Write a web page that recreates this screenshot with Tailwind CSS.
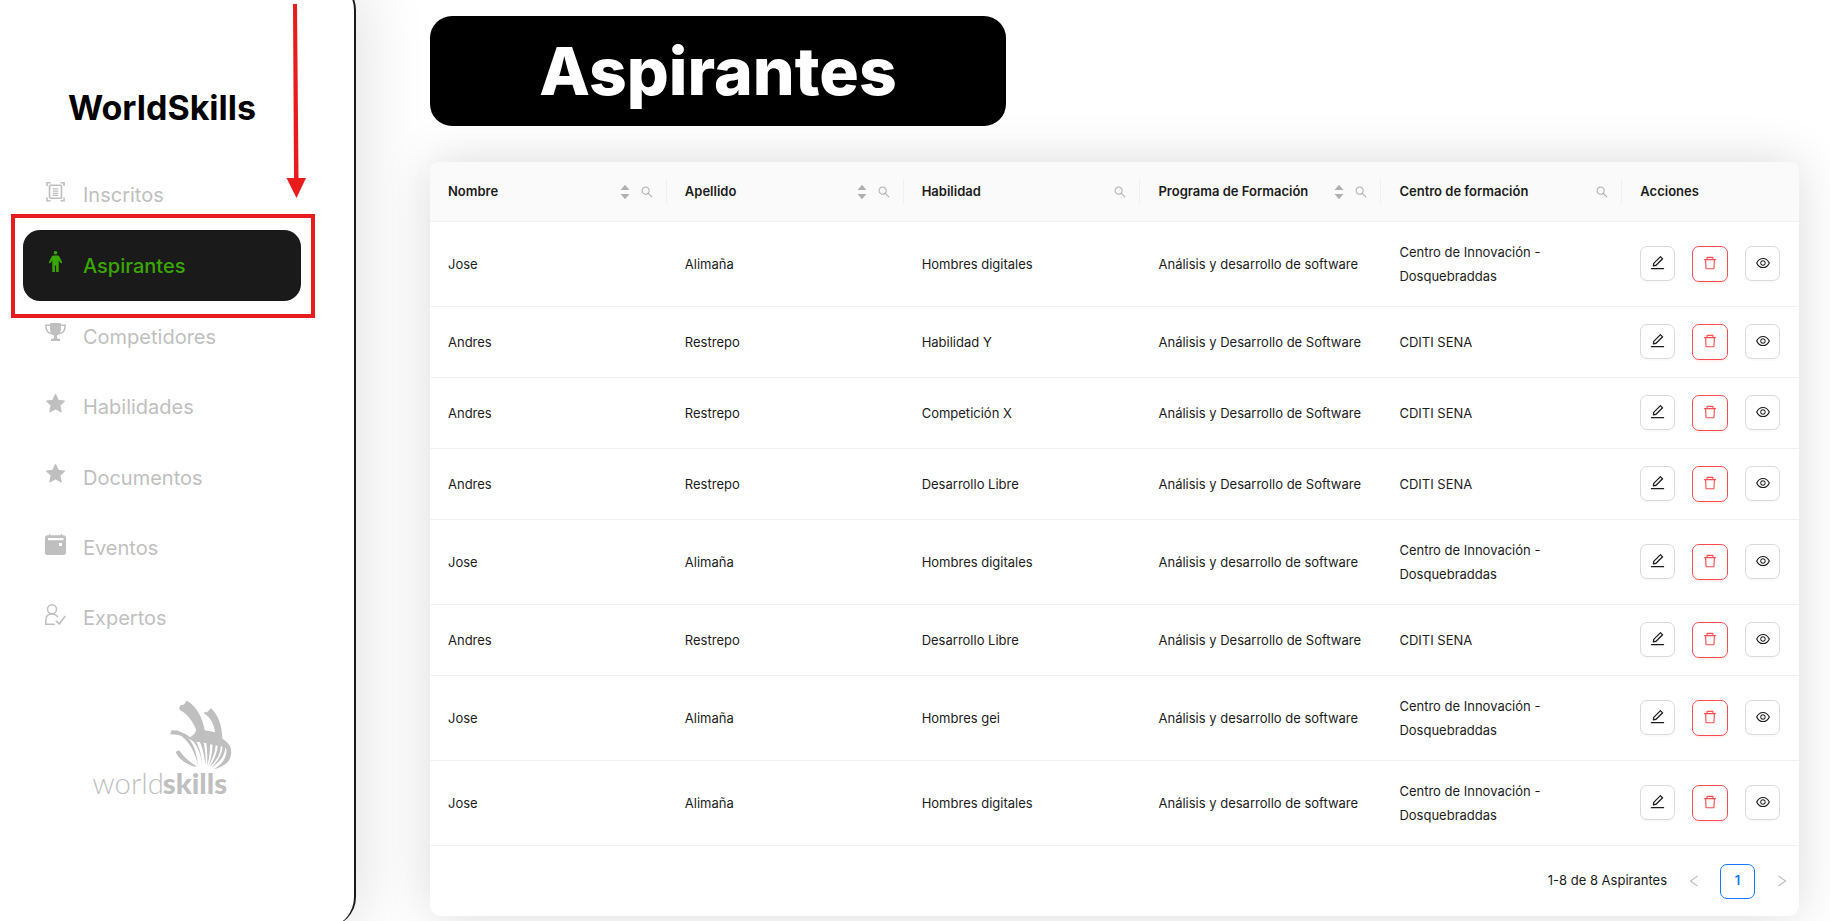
<!DOCTYPE html>
<html lang="es">
<head>
<meta charset="utf-8">
<meta name="viewport" content="width=device-width, initial-scale=1">
<title>WorldSkills - Aspirantes</title>
<script src="https://cdn.jsdelivr.net/npm/@tailwindcss/browser@4"></script>
</head>
<body class="bg-white font-[Inter,'Liberation_Sans',sans-serif] text-[#1c1c1c]">
<svg class="hidden" aria-hidden="true">
  <symbol id="sort" viewBox="0 0 10 16"><path d="M5 .8 9.500 6H.5zM5 15.200 .5 10h9z"/></symbol>
  <symbol id="search" viewBox="0 0 1024 1024"><path d="M909.6 854.5L649.9 594.8C690.2 542.7 712 479 712 412c0-80.2-31.3-155.4-87.9-212.1-56.6-56.7-132-87.9-212.1-87.9s-155.5 31.3-212.1 87.9C143.2 256.5 112 331.8 112 412c0 80.1 31.3 155.5 87.9 212.1C256.5 680.8 331.8 712 412 712c67 0 130.6-21.8 182.7-62l259.7 259.6a8.2 8.2 0 0 0 11.6 0l43.6-43.5a8.2 8.2 0 0 0 0-11.6zM570.4 570.4C528 612.7 471.8 636 412 636s-116-23.3-158.4-65.6C211.3 528 188 471.8 188 412s23.3-116.1 65.6-158.4C296 211.3 352.2 188 412 188s116.1 23.2 158.4 65.600S636 352.2 636 412s-23.3 116.1-65.6 158.400z"/></symbol>
  <symbol id="edit" viewBox="0 0 1024 1024"><path d="M257.7 752c2 0 4-.2 6-.5L431.9 722c2-.4 3.9-1.3 5.3-2.8l423.9-423.9a9.96 9.96 0 0 0 0-14.1L694.9 114.900c-1.9-1.9-4.4-2.9-7.1-2.9s-5.2 1-7.1 2.9L256.8 538.8c-1.5 1.5-2.4 3.3-2.8 5.3l-29.5 168.2a33.5 33.5 0 0 0 9.4 29.8c6.600 6.400 14.900 9.900 23.800 9.900zm67.400-174.400L687.800 215l73.300 73.300-362.700 362.600-88.900 15.700 15.600-89zM880 836H144c-17.700 0-32 14.300-32 32v36c0 4.400 3.600 8 8 8h784c4.400 0 8-3.600 8-8v-36c0-17.700-14.300-32-32-32z"/></symbol>
  <symbol id="trash" viewBox="0 0 1024 1024"><path d="M360 184h-8c4.400 0 8-3.600 8-8v8h304v-8c0 4.400 3.600 8 8 8h-8v72h72v-80c0-35.300-28.700-64-64-64H352c-35.300 0-64 28.700-64 64v80h72v-72zm504 72H160c-17.700 0-32 14.300-32 32v32c0 4.400 3.600 8 8 8h60.400l24.700 523c1.600 34.100 29.800 61 63.900 61h454c34.200 0 62.300-26.800 63.900-61l24.700-523H888c4.400 0 8-3.600 8-8v-32c0-17.700-14.300-32-32-32zM731.300 840H292.700l-24.200-512h487l-24.200 512z"/></symbol>
  <symbol id="eye" viewBox="0 0 1024 1024"><path d="M942.2 486.2C847.4 286.5 704.1 186 512 186c-192.2 0-335.4 100.5-430.2 300.3a60.3 60.3 0 0 0 0 51.5C176.6 737.5 319.9 838 512 838c192.2 0 335.4-100.5 430.2-300.3 7.700-16.200 7.700-35 0-51.500zM512 766c-161.300 0-279.400-81.800-362.700-254C232.600 339.800 350.700 258 512 258c161.300 0 279.400 81.800 362.700 254C791.500 684.200 673.400 766 512 766zm-4-430c-97.200 0-176 78.800-176 176s78.800 176 176 176 176-78.800 176-176-78.800-176-176-176zm0 288c-61.900 0-112-50.100-112-112s50.100-112 112-112 112 50.100 112 112-50.100 112-112 112z"/></symbol>
</svg>

<div class="relative flex h-screen overflow-hidden">
  <!-- Sidebar -->
  <aside class="-mt-5 h-[calc(100vh+26px)] w-[356px] shrink-0 rounded-r-[30px] border-r-2 border-[#1a1a1a] bg-white pr-[53px] pl-[23px] shadow-[0_0_70px_rgba(0,0,0,0.15)]">
    <h2 class="pt-[108px] text-center text-[34px] leading-10 font-bold text-black">WorldSkills</h2>
    <nav class="mt-8 text-xl text-[#bfbfbf]">
      <a href="#" class="flex h-[70px] items-center gap-[17px] pl-[22px]">
        <svg class="mb-2 size-[21px]" viewBox="0 0 21 21" fill="none" stroke="currentColor" stroke-width="1.600"><path d="M2 5V1.700h3.500M15.500 1.700H19V5M19 16.500v3.300h-3.500M5.500 19.800H2v-3.300"/><rect x="4.500" y="4.300" width="12" height="13" rx="1"/><path d="M7.800 7.800h5.400M7.800 10.100h5.400M7.800 12.300h5.400M7.800 14.400h5.400" stroke-width="1.300"/></svg>
        Inscritos</a>
      <a href="#" aria-current="page" class="flex h-[71px] items-center gap-[17px] rounded-[17px] bg-[#1a1a1a] pl-[22px] font-medium text-[#3ba800]">
        <svg class="mb-2 size-[21px]" viewBox="0 0 21 21" fill="currentColor"><circle cx="10.500" cy="1.800" r="1.800"/><path d="M8.800 4.500h3.400c1.200 0 2 .6 2.500 1.700l2.300 4.700c.4 1.100-1.100 1.900-1.700.9L13.700 9.300V21h-2.600v-6.500H9.900V21H7.300V9.300l-1.600 2.500c-.6 1-2.100.2-1.700-.9l2.300-4.700c.5-1.100 1.300-1.700 2.500-1.700z"/></svg>
        Aspirantes</a>
      <a href="#" class="flex h-[71px] items-center gap-[17px] pl-[22px]">
        <svg class="mb-2 size-[21px]" viewBox="0 0 21 21"><path fill="currentColor" d="M5 1.900a1 1 0 0 1 1-1h9a1 1 0 0 1 1 1v4.500c0 3.600-1.400 6-4 7v2.900l3 .8v1.800H6v-1.800l3-.8v-2.900C6.400 12.400 5 10 5 6.400z"/><path fill="none" stroke="currentColor" stroke-width="1.500" d="M5.200 3.300H.8c0 5 2.200 8 6 8.400M15.800 3.300h4.400c0 5-2.200 8-6 8.400"/></svg>
        Competidores</a>
      <a href="#" class="flex h-[70px] items-center gap-[17px] pl-[22px]">
        <svg class="mb-2 size-[21px]" viewBox="0 0 21 21" fill="currentColor" stroke="currentColor" stroke-width="1.400" stroke-linejoin="round"><path d="m10.500 1.800 2.600 5.600 6.200.7-4.600 4.200 1.300 6.400-5.500-3.100L5 18.700l1.300-6.400-4.600-4.200 6.200-.7z"/></svg>
        Habilidades</a>
      <a href="#" class="flex h-[71px] items-center gap-[17px] pl-[22px]">
        <svg class="mb-2 size-[21px]" viewBox="0 0 21 21" fill="currentColor" stroke="currentColor" stroke-width="1.400" stroke-linejoin="round"><path d="m10.500 1.800 2.600 5.600 6.200.7-4.600 4.200 1.300 6.400-5.500-3.100L5 18.700l1.300-6.400-4.600-4.200 6.200-.7z"/></svg>
        Documentos</a>
      <a href="#" class="flex h-[70px] items-center gap-[17px] pl-[22px]">
        <svg class="mb-2 size-[21px]" viewBox="0 0 21 21" fill="currentColor" fill-rule="evenodd"><path d="M4 0h1.200v1.200h10.600V0H17v1.200h1.500A2.500 2.500 0 0 1 21 3.700v14.800a2.500 2.500 0 0 1-2.500 2.500h-16A2.500 2.500 0 0 1 0 18.500V3.700a2.500 2.500 0 0 1 2.500-2.500H4zM3 3.900v2.300h15.500V3.900zM14 9v3h3V9z"/></svg>
        Eventos</a>
      <a href="#" class="flex h-[70px] items-center gap-[17px] pl-[22px]">
        <svg class="mb-2 size-[21px]" viewBox="0 0 21 21" fill="none" stroke="currentColor" stroke-width="1.500"><circle cx="7" cy="5.300" r="4.500"/><path d="M9.800 20.200H.8v-3.700C.8 12.500 3.200 10 6.800 10c3 0 4.900 1.100 6 3.300M10.800 16.800l3.600 3L20.300 12"/></svg>
        Expertos</a>
    </nav>
    <svg class="mt-[45px] ml-16 w-[150px] overflow-visible" viewBox="81 54 450 300" fill="#bfbfbf" role="img" aria-label="worldskills">
      <g transform="translate(300 45)">
        <path d="M58 38 62 30q8 1 12-4l6-9C108 30 128 68 134 106l31 6c-2-24-14-45-33-57l1-4q8 2 12-3l7-8c22 18 34 50 35 91 22 13 31 30 25 52-4-18-14-24-29-29-25-4-42-9-62-12-10-4-20-12-36-14 15-5 22-13 23-25C98 79 82 55 59 45z"/>
        <path d="m30 118 6-14q8 4 14 2 24 8 45 24l25 10q-12 3-22-2c-12-9-40-20-68-20z"/>
        <path d="M56 117c26 4 50 20 59 97-9-40-25-74-59-97zM47 172l5-5h7c12 18 28 33 52 47l-8 1c-28-10-46-22-56-43z"/>
        <path d="m96 134 8-2c14 22 20 45 24 80-6-36-14-58-32-78zM117 135l12 1c7 26 9 50 7 76-3-32-8-54-19-77zM138 137l12 2c1 26-2 50-8 73 0-24 0-50-4-75zM158 142l9 2c0 26-9 48-22 69 9-24 13-46 13-71zM173 145l9 2c2 28-12 50-33 68 14-22 24-42 24-70zM188 150l7 4c2 28-16 48-42 64 20-18 34-38 35-68zM199 156l13 15c4 28-22 46-52 52 26-14 43-34 39-67z"/>
      </g>
      <text x="97" y="343" class="font-[Lato] text-[88px] font-light">world</text>
      <text x="308" y="343" class="font-[Lato] text-[88px] font-black">skills</text>
    </svg>
  </aside>

  <!-- Content -->
  <main class="min-w-0 flex-1 pt-4 pr-[31px] pl-[74px]">
    <h1 class="flex h-[110px] w-full max-w-xl items-center justify-center rounded-[22px] bg-black text-[66px] leading-none font-extrabold text-white">Aspirantes</h1>
    <section class="mt-9 rounded-[10px] bg-white text-[13px] shadow-[0_0_50px_rgba(0,0,0,0.15)]">
      <table class="w-full table-fixed border-separate border-spacing-0 text-left">
        <colgroup><col class="w-[17.3%]"><col class="w-[17.3%]"><col class="w-[17.3%]"><col class="w-[17.6%]"><col class="w-[17.6%]"><col class="w-[12.9%]"></colgroup>
        <thead><tr id="head"></tr></thead>
        <tbody id="rows"></tbody>
      </table>
      <div class="flex h-[70px] items-center justify-end gap-[9px]">
        <span>1-8 de 8 Aspirantes</span>
        <button disabled aria-label="Anterior" class="flex size-[35px] items-center justify-center text-[#bfbfbf]"><svg class="size-3" viewBox="0 0 12 12" fill="none" stroke="currentColor" stroke-width="1.200"><path d="M9.500 1 2.500 6l7 5"/></svg></button>
        <button aria-current="page" class="size-[35px] rounded-[7px] border border-[#1677ff] font-semibold text-[#1677ff]">1</button>
        <button disabled aria-label="Siguiente" class="flex size-[35px] items-center justify-center text-[#bfbfbf]"><svg class="size-3" viewBox="0 0 12 12" fill="none" stroke="currentColor" stroke-width="1.200"><path d="m2.500 1 7 5-7 5"/></svg></button>
      </div>
    </section>
  </main>

  <!-- Highlight over the active menu entry -->
  <div class="pointer-events-none absolute top-[214px] left-[11px] h-[104px] w-[304px] border-4 border-[#e81c1c]"></div>
  <svg class="pointer-events-none absolute top-0 left-[280px] h-[200px] w-8" viewBox="0 0 32 200" fill="#e81c1c" aria-hidden="true"><path d="M13 4h4l1.500 174H26L16.500 198 6.500 178h7.500z"/></svg>
</div>

<script>
const columns = [['Nombre', true, true], ['Apellido', true, true], ['Habilidad', false, true], ['Programa de Formación', true, true], ['Centro de formación', false, true], ['Acciones', false, false]];
const icon = (id, cls) => `<svg class="${cls}" fill="currentColor" aria-hidden="true"><use href="#${id}"/></svg>`;
document.getElementById('head').innerHTML = columns.map(([name, sort, search], i) => `
  <th scope="col" class="h-[60px] border-b border-[#f0f0f0] bg-[#fafafa] p-0 font-semibold first:rounded-tl-lg last:rounded-tr-lg">
    <div class="flex h-[25px] items-center pl-[18px] ${i < 5 ? 'border-r border-[#f0f0f0] pr-3' : ''}">
      <span class="flex-1 whitespace-nowrap">${name}</span>
      ${sort ? `<button aria-label="Ordenar ${name}" class="mr-2.5 text-[#b0b0b0]">${icon('sort', 'h-4 w-2.5')}</button>` : ''}
      ${search ? `<button aria-label="Buscar ${name}" class="text-[#b0b0b0]">${icon('search', 'size-3.5')}</button>` : ''}
    </div>
  </th>`).join('');

const dos = 'Centro de Innovación - Dosquebraddas', low = 'Análisis y desarrollo de software', cap = 'Análisis y Desarrollo de Software';
const data = [
  ['Jose', 'Alimaña', 'Hombres digitales', low, dos],
  ['Andres', 'Restrepo', 'Habilidad Y', cap, 'CDITI SENA'],
  ['Andres', 'Restrepo', 'Competición X', cap, 'CDITI SENA'],
  ['Andres', 'Restrepo', 'Desarrollo Libre', cap, 'CDITI SENA'],
  ['Jose', 'Alimaña', 'Hombres digitales', low, dos],
  ['Andres', 'Restrepo', 'Desarrollo Libre', cap, 'CDITI SENA'],
  ['Jose', 'Alimaña', 'Hombres gei', low, dos],
  ['Jose', 'Alimaña', 'Hombres digitales', low, dos],
];
document.getElementById('rows').innerHTML = data.map(r => `
  <tr class="${r[4] === dos ? 'h-[85px]' : 'h-[71px]'}">
    ${r.map(c => `<td class="border-b border-[#f0f0f0] py-0 pr-4 pl-[18px] leading-6">${c}</td>`).join('')}
    <td class="border-b border-[#f0f0f0] py-0 pr-0 pl-[18px]">
      <div class="flex gap-[17px]">
        <button aria-label="Editar" class="flex size-[35px] items-center justify-center rounded-[7px] border border-[#d9d9d9] pb-0.5 shadow-[0_2px_0_rgba(0,0,0,0.02)]">${icon('edit', 'size-[17px]')}</button>
        <button aria-label="Eliminar" class="flex size-9 items-center justify-center rounded-[7px] border border-[#ff4d4f] pb-0.5 text-[#ff4d4f] shadow-[0_2px_0_rgba(255,38,5,0.06)]">${icon('trash', 'size-4')}</button>
        <button aria-label="Ver" class="flex size-[35px] items-center justify-center rounded-[7px] border border-[#d9d9d9] pb-0.5 shadow-[0_2px_0_rgba(0,0,0,0.02)]">${icon('eye', 'size-4')}</button>
      </div>
    </td>
  </tr>`).join('');
</script>
</body>
</html>
